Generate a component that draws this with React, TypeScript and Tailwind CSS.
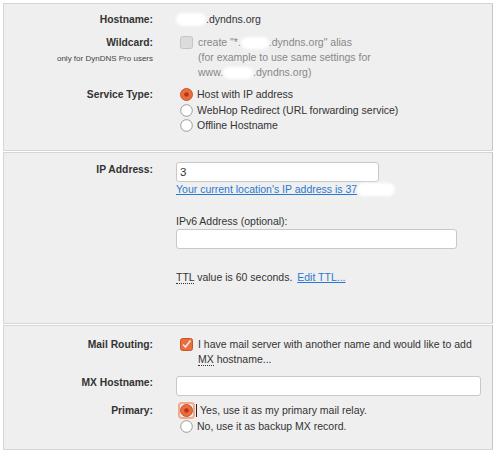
import React from 'react';

const Blob = ({ w, h = 12, className = '' }: { w: number; h?: number; className?: string }) => (
  <span
    className={`inline-block align-middle rounded-full bg-white blur-[1.5px] ${className}`}
    style={{ width: w, height: h }}
  />
);

function Radio({ checked = false, focus = false }: { checked?: boolean; focus?: boolean }) {
  return (
    <span className={`relative inline-flex shrink-0 items-center justify-center w-[13px] h-[13px] ${focus ? 'outline outline-2 outline-[#f3a98b] rounded-[2px]' : ''}`}>
      <svg width="13" height="13" viewBox="0 0 13 13">
        {checked ? (
          <>
            <circle cx="6.5" cy="6.5" r="6" fill="#ea6d3e" stroke="#c9552b" strokeWidth="1" />
            <circle cx="6.5" cy="6.5" r="2.3" fill="#b8331a" />
          </>
        ) : (
          <circle cx="6.5" cy="6.5" r="5.8" fill="#ffffff" stroke="#9a9a9a" strokeWidth="1" />
        )}
      </svg>
    </span>
  );
}

function Check({ checked = false, disabled = false }: { checked?: boolean; disabled?: boolean }) {
  return (
    <svg width="13" height="13" viewBox="0 0 13 13" className="shrink-0">
      {checked ? (
        <>
          <rect x="0.5" y="0.5" width="12" height="12" rx="2" fill="#ea6d3e" stroke="#c9552b" />
          <path d="M3 6.5 L5.5 9 L10.5 2.5" fill="none" stroke="#f3e9e4" strokeWidth="1.6" />
        </>
      ) : (
        <rect x="0.5" y="0.5" width="12" height="12" rx="2" fill={disabled ? '#dcdcdc' : '#fff'} stroke="#c4c4c4" />
      )}
    </svg>
  );
}

function Row({ label, sub, children, className = '' }: { label: string; sub?: string; children: React.ReactNode; className?: string }) {
  return (
    <div className={`flex ${className}`}>
      <div className="w-[149px] shrink-0 text-right">
        <div className="font-bold text-[#333] leading-[15px] text-[10.3px]">{label}</div>
        {sub && <div className="text-[8px] text-[#444] leading-[10px] mt-[4px]">{sub}</div>}
      </div>
      <div className="ml-[23px] flex-1">{children}</div>
    </div>
  );
}

export default function App() {
  return (
    <div className="w-[500px] h-[453px] bg-white pt-[3px] pl-[3px] text-[10.5px] leading-[15px] text-[#333] font-['Liberation_Sans',Arial,sans-serif]">
      {/* Panel 1 */}
      <div className="w-[490px] h-[148px] border border-[#d6d6d6] border-r-[#c4c4c4] bg-[#efefef] pt-[8px]">
        <Row label="Hostname:">
          <div className="flex items-center">
            <Blob w={30} h={13} />
            <span>.dyndns.org</span>
          </div>
        </Row>
        <Row label="Wildcard:" sub="only for DynDNS Pro users" className="mt-[8px]">
          <div className="flex gap-[5px] pl-[4px] text-[#888]">
            <div className="pt-[1px]"><Check disabled /></div>
            <div>
              <div className="flex items-center">create "*.<Blob w={28} h={12} />.dyndns.org" alias</div>
              <div>(for example to use same settings for</div>
              <div className="flex items-center">www.<Blob w={30} h={12} />.dyndns.org)</div>
            </div>
          </div>
        </Row>
        <Row label="Service Type:" className="mt-[7px]">
          <div className="pl-[4px] flex flex-col gap-[0.5px]">
            <label className="flex items-center gap-[4px]"><Radio checked /> Host with IP address</label>
            <label className="flex items-center gap-[4px]"><Radio /> WebHop Redirect (URL forwarding service)</label>
            <label className="flex items-center gap-[4px]"><Radio /> Offline Hostname</label>
          </div>
        </Row>
      </div>

      {/* Panel 2 */}
      <div className="mt-[1px] w-[490px] h-[172px] border border-[#d6d6d6] border-r-[#c4c4c4] bg-[#efefef] pt-[9px]">
        <Row label="IP Address:">
          <div className="w-[203px] h-[20px] rounded-[3px] border border-[#c8c8c8] bg-white flex items-center px-[3px] text-[11.5px]">
            3<Blob w={45} h={8} className="ml-[6px] opacity-60" />
          </div>
          <div className="flex items-center">
            <a className="text-[#2a78d2] underline">Your current location's IP address is 37</a>
            <Blob w={38} h={13} />
          </div>
          <div className="mt-[17px]">IPv6 Address (optional):</div>
          <div className="w-[281px] h-[20px] rounded-[3px] border border-[#c8c8c8] bg-white" />
          <div className="mt-[21px]">
            <abbr className="no-underline border-b border-dotted border-[#333]">TTL</abbr> value is 60 seconds.{' '}
            <a className="ml-[2px] text-[#2a78d2] underline">Edit TTL...</a>
          </div>
        </Row>
      </div>

      {/* Panel 3 */}
      <div className="mt-[1px] w-[490px] h-[125px] border border-[#d6d6d6] border-r-[#c4c4c4] bg-[#efefef] pt-[11px]">
        <Row label="Mail Routing:">
          <div className="flex gap-[5px] pl-[4px]">
            <div className="pt-[1px]"><Check checked /></div>
            <div>
              <div>I have mail server with another name and would like to add</div>
              <div>
                <abbr className="no-underline border-b border-dotted border-[#333]">MX</abbr> hostname...
              </div>
            </div>
          </div>
        </Row>
        <Row label="MX Hostname:" className="mt-[8px] items-start">
          <div className="mt-[1px] w-[305px] h-[20px] rounded-[3px] border border-[#c8c8c8] bg-white" />
        </Row>
        <Row label="Primary:" className="mt-[7px]">
          <div className="pl-[4px] flex flex-col gap-[0.5px]">
            <label className="flex items-center gap-[3px]">
              <Radio checked focus />
              <span className="w-px h-[13px] bg-[#222]" />
              Yes, use it as my primary mail relay.
            </label>
            <label className="flex items-center gap-[4px]"><Radio /> No, use it as backup MX record.</label>
          </div>
        </Row>
      </div>
    </div>
  );
}
